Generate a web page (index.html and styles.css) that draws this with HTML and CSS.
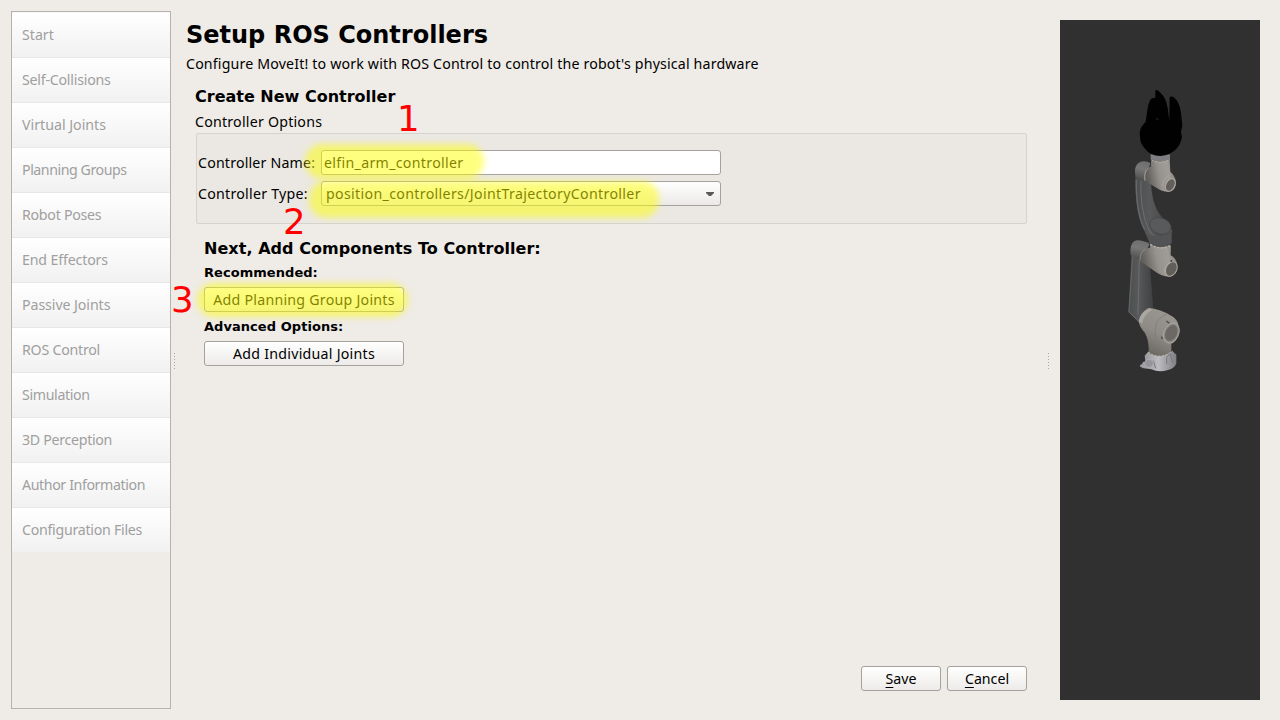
FILE: index.html
```html
<!DOCTYPE html>
<html lang="en">
<head>
<meta charset="utf-8">
<title>Setup ROS Controllers</title>
<link rel="stylesheet" href="styles.css">
</head>
<body>
<div class="window">
  <nav class="sidebar">
    <div class="nav-item"><span class="n1">Start</span></div>
    <div class="nav-item"><span class="n2">Self-Collisions</span></div>
    <div class="nav-item"><span class="n3">Virtual Joints</span></div>
    <div class="nav-item"><span class="n4">Planning Groups</span></div>
    <div class="nav-item"><span class="n5">Robot Poses</span></div>
    <div class="nav-item"><span class="n6">End Effectors</span></div>
    <div class="nav-item"><span class="n7">Passive Joints</span></div>
    <div class="nav-item"><span class="n8">ROS Control</span></div>
    <div class="nav-item"><span class="n9">Simulation</span></div>
    <div class="nav-item"><span class="n10">3D Perception</span></div>
    <div class="nav-item"><span class="n11">Author Information</span></div>
    <div class="nav-item"><span class="n12">Configuration Files</span></div>
  </nav>
  <div class="splitter splitter-left"><i class="grip"></i></div>
  <main class="main">
    <h1 class="title">Setup ROS Controllers</h1>
    <p class="subtitle"><span>Configure MoveIt! to work with ROS Control to control the robot's physical hardware</span></p>
    <h2 class="section">Create New Controller</h2>
    <div class="group-label"><span>Controller Options</span></div>
    <div class="group">
      <div class="row">
        <label class="label label-name">Controller Name:</label>
        <div class="field input"><span>elfin_arm_controller</span></div>
      </div>
      <div class="row">
        <label class="label label-type">Controller Type:</label>
        <div class="field select"><span>position_controllers/JointTrajectoryController</span>
          <svg class="arrow" width="8" height="4" viewBox="0 0 8 4"><path d="M0 0h8v1L5 4H3L0 1z" fill="#5a5a5a"/></svg>
        </div>
      </div>
    </div>
    <div class="components">
      <h2 class="next">Next, Add Components To Controller:</h2>
      <h3 class="sub">Recommended:</h3>
      <div class="button wide"><span class="b1">Add Planning Group Joints</span></div>
      <h3 class="sub sub-advanced">Advanced Options:</h3>
      <div class="button wide"><span class="b1">Add Individual Joints</span></div>
    </div>
    <div class="footer">
      <div class="button"><span><u>S</u>ave</span></div>
      <div class="button"><span><u>C</u>ancel</span></div>
    </div>
  </main>
  <div class="splitter splitter-right"><i class="grip"></i></div>
  <aside class="viewer">
    <svg width="200" height="680" viewBox="1060 20 200 680">
      <defs>
        <linearGradient id="shell" x1="0" x2="1" y1=".2" y2="0"><stop offset="0" stop-color="#5f5c59"/><stop offset=".4" stop-color="#96928d"/><stop offset=".7" stop-color="#a09c97"/><stop offset="1" stop-color="#77736f"/></linearGradient>
        <linearGradient id="drum" x1=".7" x2=".3" y1="0" y2="1"><stop offset="0" stop-color="#9b9792"/><stop offset=".5" stop-color="#8f8b86"/><stop offset="1" stop-color="#65625e"/></linearGradient>
        <linearGradient id="cap" x1=".6" x2=".4" y1="0" y2="1"><stop offset="0" stop-color="#6e6e6f"/><stop offset=".4" stop-color="#777778"/><stop offset="1" stop-color="#4b4b4c"/></linearGradient>
        <linearGradient id="link" x1="0" x2="1" y1="0" y2="0"><stop offset="0" stop-color="#4c4d4e"/><stop offset=".4" stop-color="#58595a"/><stop offset="1" stop-color="#3f4041"/></linearGradient>
        <linearGradient id="base" x1="0" x2="1" y1="0" y2="0"><stop offset="0" stop-color="#8e8e92"/><stop offset=".5" stop-color="#bcbcc1"/><stop offset="1" stop-color="#808084"/></linearGradient>
      </defs>
      <g transform="translate(1110 85) scale(.33333)">
        <!-- upper link -->
        <path d="M76 270C75 345 83 400 103 437Q111 455 120 475V490Q150 510 183 475L185 435Q183 417 160 400Q127 370 123 295z" fill="url(#link)"/>
        <path d="M93 288C91 340 98 400 120 440Q135 463 165 454Q183 450 184 435" fill="none" stroke="#6d6e6f" stroke-width="3"/>
        <path d="M79 285C78 340 84 395 104 434" fill="none" stroke="#66686a" stroke-width="4"/>
        <ellipse cx="151" cy="423" rx="33" ry="24" transform="rotate(18 151 423)" fill="#595a5b" stroke="#454647" stroke-width="2"/>
        <path d="M110 447Q150 462 185 437V475Q150 500 121 481z" fill="#525354"/>
        <!-- wrist joint -->
        <path d="M75 264Q72 239 92 230Q107 226 121 234L111 270L105 289L77 275z" fill="url(#cap)"/>
        <path d="M124 222Q150 236 179 221L181 260Q195 272 198 290Q198 317 177 320Q159 322 139 308L105 287Q101 270 107 255Q112 245 122 246z" fill="url(#shell)"/>
        <path d="M105 287Q101 262 114 250" fill="none" stroke="#aaa6a1" stroke-width="3"/>
        <path d="M122 208H180V222Q150 238 122 223z" fill="#7d7d82"/>
        <path d="M125 225Q151 241 178 223" fill="none" stroke="#b7b1a3" stroke-width="3" stroke-dasharray="7 4"/>
        <path d="M158 305Q158 281 179 271" fill="none" stroke="#b1ada8" stroke-width="2"/>
        <ellipse cx="181" cy="300" rx="13" ry="20" transform="rotate(27 181 300)" fill="#625f5b" stroke="#aca8a3" stroke-width="3"/>
      </g>
      <g transform="translate(1110 230) scale(.33333)">
        <!-- lower link -->
        <path d="M65 67L118 84L130 238L92 282L55 246z" fill="url(#link)"/>
        <path d="M88 88L84 255" stroke="#6b6c6d" stroke-width="3"/>
        <path d="M68 79L57 246L87 276" fill="none" stroke="#646668" stroke-width="3"/>
        <!-- elbow joint -->
        <path d="M61 60Q63 35 80 31Q99 30 119 42L108 65L90 91L62 75z" fill="url(#cap)"/>
        <path d="M122 45Q151 58 183 46L182 76Q201 84 202 109Q202 135 179 140Q157 141 133 123L90 93Q87 76 97 62Q105 54 120 53z" fill="url(#shell)"/>
        <path d="M90 91Q90 67 106 57" fill="none" stroke="#a5a19c" stroke-width="2"/>
        <path d="M121 43Q151 63 183 45" fill="none" stroke="#bbb4a4" stroke-width="4" stroke-dasharray="7 4"/>
        <path d="M163 130Q160 108 184 93" fill="none" stroke="#b1ada8" stroke-width="2"/>
        <ellipse cx="184" cy="117" rx="16" ry="23" transform="rotate(27 184 117)" fill="#625f5b" stroke="#aca8a3" stroke-width="3"/>
        <circle cx="184" cy="93" r="3" fill="#45423f"/>
        <!-- shoulder joint -->
        <path d="M86 274Q91 248 115 234Q150 235 190 261Q208 275 207 302Q202 334 184 342L184 378Q150 395 115 377Q120 337 105 309Q88 291 86 274z" fill="url(#drum)"/>
        <path d="M86 274Q91 247 119 235L128 239Q101 252 96 281z" fill="#aaa6a1"/>
        <path d="M139 327Q130 298 142 274Q153 257 173 251" fill="none" stroke="#7b7773" stroke-width="2"/>
        <ellipse cx="184" cy="309" rx="22" ry="31" transform="rotate(25 184 309)" fill="#8b8782" stroke="#aaa6a1" stroke-width="3"/>
        <ellipse cx="184" cy="309" rx="17" ry="25" transform="rotate(25 184 309)" fill="#6c6965"/>
        <path d="M169 273L178 280M154 320L158 327" stroke="#4c4946" stroke-width="4"/>
        <!-- base -->
        <path d="M113 367Q150 393 187 363L199 374V400Q194 416 174 420Q147 429 124 418L96 414L91 405L106 394L104 377z" fill="url(#base)"/>
        <path d="M114 366Q150 392 187 364" fill="none" stroke="#c7c1b2" stroke-width="3" stroke-dasharray="7 4"/>
        <path d="M130 392L137 415M170 402V382L180 371L189 399" fill="none" stroke="#77777b" stroke-width="3"/>
        <ellipse cx="117" cy="400" rx="13" ry="12" fill="#94949a" stroke="#b6b6bb" stroke-width="2"/>
        <path d="M90 408L108 409M100 396L106 414" stroke="#a4a4a9" stroke-width="5"/>
      </g>
      <!-- gripper hand -->
      <g transform="translate(1110 85) scale(.33333)">
        <path d="M136 16Q143 12 151 23Q167 35 173 69L178 108L179 36Q188 32 196 41Q209 53 213 84L217 121L213 140L216 157Q211 178 201 190Q181 212 151 213Q120 212 106 192Q91 178 90 157Q87 134 97 122L107 110L113 70Q118 43 126 40L136 38z" fill="#010101"/>
        <path d="M138 102H146" stroke="#2b2b2b" stroke-width="3"/>
      </g>
    </svg>
  </aside>
  <div class="highlight h-name"></div>
  <div class="highlight h-type"></div>
  <div class="highlight h-add"></div>
  <div class="step s1">1</div>
  <div class="step s2">2</div>
  <div class="step s3">3</div>
</div>
</body>
</html>
```
FILE: styles.css
```css
* { box-sizing: border-box; }
body { margin: 0; background: #efebe6; color: #000; font: 14.2px/20px "Noto Sans", sans-serif; }
h1, h2, h3, p { margin: 0; }
span, label { white-space: nowrap; }
.window { position: relative; display: flex; width: 1280px; height: 720px; overflow: hidden; }
.sidebar { width: 160px; height: 698px; margin: 11px 0 0 11px; border: 1px solid #b6b3af; color: #a09f9e; }
.nav-item { height: 45px; padding: 12px 0 0 10px; border-top: 1px solid #e9e7e5; background: linear-gradient(#fff, #f1f1f1); line-height: 20px; }
.nav-item:first-child { border-top-color: #f8f7f6; }
.n2 { letter-spacing: -.23px; }
.n4 { letter-spacing: -.45px; }
.n5 { letter-spacing: -.27px; }
.n6 { letter-spacing: -.15px; }
.n7 { letter-spacing: -.08px; }
.n8 { letter-spacing: -.24px; }
.n9 { letter-spacing: -.35px; }
.n10 { letter-spacing: -.3px; }
.n11 { letter-spacing: -.39px; }
.n12 { letter-spacing: -.27px; }
.splitter { width: 15px; padding-top: 353px; }
.splitter-left { padding-left: 3px; }
.splitter-right { width: 33px; padding-left: 21px; }
.grip { display: block; width: 1px; height: 16px; background: repeating-linear-gradient(#aaa7a3 0 1px, transparent 1px 3px); }
.main { display: flex; flex-direction: column; width: 841px; padding: 20px 0 29px; }
.title { font: bold 24px/30px "DejaVu Sans", sans-serif; }
.subtitle { margin-top: 4px; height: 20px; letter-spacing: .16px; }
.section, .next { font: bold 16px/20px "DejaVu Sans", sans-serif; }
.next { letter-spacing: .05px; }
.section { margin: 13px 0 0 9px; }
.group-label { height: 20px; margin: 5px 0 0 9px; letter-spacing: .22px; }
.group { display: flex; flex-direction: column; gap: 6px; height: 91px; margin: 1px 0 0 10px; padding: 16px 0 0 1px; border: 1px solid #d6d3cf; border-radius: 2px; background: #ebe8e3; }
.row { display: flex; height: 25px; align-items: center; }
.label { width: 123px; }
.label-name { letter-spacing: .18px; }
.label-type { letter-spacing: .25px; }
.field { display: flex; align-items: center; width: 400px; height: 25px; border: 1px solid #a5a29e; border-radius: 3px; background: #fff; }
.input { padding-left: 2px; letter-spacing: .31px; }
.select { justify-content: space-between; padding: 0 6px 0 4px; background: linear-gradient(#fff, #ebe9e7); letter-spacing: .33px; }
.components { margin: 15px 0 0 18px; }
.sub { height: 17px; margin: 5px 0 6px; font: bold 13px/17px "DejaVu Sans", sans-serif; letter-spacing: .05px; }
.sub-advanced { margin: 6px 0 6px; }
.button { display: flex; justify-content: center; align-items: center; width: 80px; height: 25px; border: 1px solid #a5a29e; border-radius: 3px; background: linear-gradient(#fff, #edebe9); }
.wide { width: 200px; }
.b1 { letter-spacing: .25px; }
.button u { text-decoration-thickness: 1px; text-underline-offset: 3px; }
.footer { display: flex; justify-content: flex-end; gap: 6px; margin-top: auto; }
.viewer { width: 200px; height: 680px; margin-top: 20px; background: #303030; }
.viewer svg { display: block; }
.highlight { position: absolute; background: rgba(255, 255, 0, .5); filter: blur(3px); border-radius: 17px; }
.h-name { left: 305px; top: 144px; width: 179px; height: 35px; }
.h-type { left: 309px; top: 181px; width: 350px; height: 37px; }
.h-add { left: 197px; top: 283px; width: 211px; height: 34px; }
.step { position: absolute; color: #f00; font: 35.5px/40px "DejaVu Sans", sans-serif; }
.s1 { left: 397px; top: 99px; }
.s2 { left: 283px; top: 202px; }
.s3 { left: 171px; top: 280px; }
```
